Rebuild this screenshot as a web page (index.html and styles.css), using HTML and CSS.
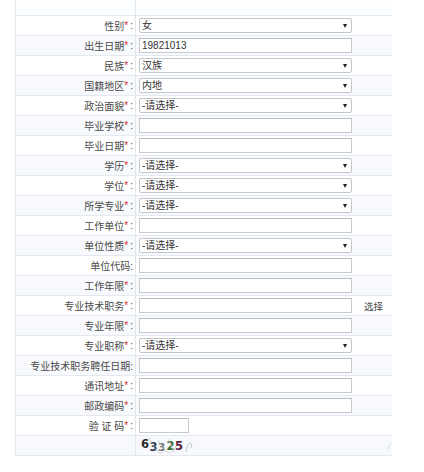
FILE: index.html
```html
<!DOCTYPE html>
<html lang="zh-CN">
<head>
<meta charset="utf-8">
<title>报名信息</title>
<link rel="stylesheet" href="styles.css">
</head>
<body>
<div class="form">
  <div class="row top"><div class="label"></div><div class="value"></div></div>
  <div class="row"><div class="label">性别<span class="req">*</span>:</div><div class="value"><span class="select"><span>女</span><span class="arrow"></span></span></div></div>
  <div class="row alt"><div class="label">出生日期<span class="req">*</span>:</div><div class="value"><span class="input">19821013</span></div></div>
  <div class="row"><div class="label">民族<span class="req">*</span>:</div><div class="value"><span class="select"><span>汉族</span><span class="arrow"></span></span></div></div>
  <div class="row alt"><div class="label">国籍地区<span class="req">*</span>:</div><div class="value"><span class="select"><span>内地</span><span class="arrow"></span></span></div></div>
  <div class="row"><div class="label">政治面貌<span class="req">*</span>:</div><div class="value"><span class="select"><span>-请选择-</span><span class="arrow"></span></span></div></div>
  <div class="row alt"><div class="label">毕业学校<span class="req">*</span>:</div><div class="value"><span class="input"></span></div></div>
  <div class="row"><div class="label">毕业日期<span class="req">*</span>:</div><div class="value"><span class="input"></span></div></div>
  <div class="row alt"><div class="label">学历<span class="req">*</span>:</div><div class="value"><span class="select"><span>-请选择-</span><span class="arrow"></span></span></div></div>
  <div class="row"><div class="label">学位<span class="req">*</span>:</div><div class="value"><span class="select"><span>-请选择-</span><span class="arrow"></span></span></div></div>
  <div class="row alt"><div class="label">所学专业<span class="req">*</span>:</div><div class="value"><span class="select"><span>-请选择-</span><span class="arrow"></span></span></div></div>
  <div class="row"><div class="label">工作单位<span class="req">*</span>:</div><div class="value"><span class="input"></span></div></div>
  <div class="row alt"><div class="label">单位性质<span class="req">*</span>:</div><div class="value"><span class="select"><span>-请选择-</span><span class="arrow"></span></span></div></div>
  <div class="row"><div class="label">单位代码:</div><div class="value"><span class="input"></span></div></div>
  <div class="row alt"><div class="label">工作年限<span class="req">*</span>:</div><div class="value"><span class="input"></span></div></div>
  <div class="row"><div class="label">专业技术职务<span class="req">*</span>:</div><div class="value"><span class="input"></span><span class="pick">选择</span></div></div>
  <div class="row alt"><div class="label">专业年限<span class="req">*</span>:</div><div class="value"><span class="input"></span></div></div>
  <div class="row"><div class="label">专业职称<span class="req">*</span>:</div><div class="value"><span class="select"><span>-请选择-</span><span class="arrow"></span></span></div></div>
  <div class="row alt"><div class="label">专业技术职务聘任日期:</div><div class="value"><span class="input"></span></div></div>
  <div class="row"><div class="label">通讯地址<span class="req">*</span>:</div><div class="value"><span class="input"></span></div></div>
  <div class="row alt"><div class="label">邮政编码<span class="req">*</span>:</div><div class="value"><span class="input"></span></div></div>
  <div class="row"><div class="label">验 证 码<span class="req">*</span>:</div><div class="value"><span class="input short"></span></div></div>
  <div class="row alt"><div class="label"></div><div class="value">
    <span class="captcha">
      <span class="d d1">6</span><span class="d d2">3</span><span class="d d3">3</span><span class="d d4">2</span><span class="d d5">5</span>
      <svg class="noise" width="56" height="20" viewBox="0 0 56 20"><path d="M8 2 C11 6 12 11 16 15 S22 17 24 13" fill="none" stroke="#b9c2c0" stroke-width="0.7"/><path d="M17 4 C20 9 22 13 26 16 S33 15 35 10" fill="none" stroke="#c3c9c4" stroke-width="0.7"/><path d="M27 3 C30 8 31 13 34 17" fill="none" stroke="#c0c6c2" stroke-width="0.7"/><path d="M45 16 C46 11 47 7 49 7 C51 7 51 10 50 12" fill="none" stroke="#a9b0b0" stroke-width="0.7"/></svg>
    </span>
    <span class="speck">⁄</span>
  </div></div>
</div>
</body>
</html>
```

FILE: styles.css
```css
body {
  margin: 0;
  background: #ffffff;
  font-family: "Liberation Sans", "Noto Sans CJK SC", sans-serif;
  font-size: 10px;
  color: #333333;
}

.form {
  margin-left: 15px;
  width: 377px;
  border-left: 1px solid #e1e7ed;
  box-sizing: border-box;
}

.row {
  display: flex;
  height: 20px;
  box-sizing: border-box;
  border-bottom: 1px solid #e4e9ef;
  background: #ffffff;
}

.row.alt {
  background: #f7f9fc;
}

.row.top {
  height: 16px;
  background: #fcfdfe;
}

.label {
  width: 120px;
  flex: none;
  box-sizing: border-box;
  border-right: 1px solid #e1e7ed;
  display: flex;
  align-items: center;
  justify-content: flex-end;
  padding-right: 2px;
  color: #4a4a4a;
  white-space: pre;
}

.req {
  color: #d0302f;
  margin: 0 2px 0 0;
}

.value {
  flex: 1;
  display: flex;
  align-items: center;
  padding-left: 3px;
}

.input,
.select {
  width: 213px;
  height: 15px;
  box-sizing: border-box;
  border: 1px solid #c8cbce;
  border-top-color: #b8bcc0;
  background: #ffffff;
  display: flex;
  align-items: center;
  padding: 0 2px;
  line-height: 13px;
}

.select {
  border-radius: 2px;
  border-color: #c5c8cb;
  justify-content: space-between;
  padding-right: 4px;
}

.arrow {
  width: 0;
  height: 0;
  border-left: 2.5px solid transparent;
  border-right: 2.5px solid transparent;
  border-top: 4px solid #222222;
}

.input.short {
  width: 50px;
}

.pick {
  margin-left: 12px;
  color: #444444;
  font-size: 9.5px;
}

.captcha {
  position: relative;
  display: flex;
  align-items: center;
  height: 19px;
  padding-left: 2px;
  font-family: "DejaVu Sans", sans-serif;
  font-weight: bold;
  font-size: 11.5px;
}

.d {
  display: inline-block;
  width: 8.5px;
}

.d1 { color: #2c2c2c; transform: translateY(-2px); }
.d2 { color: #2f3a52; transform: translateY(1px); }
.d3 { color: #6f7472; font-size: 10.5px; transform: translateY(1px); }
.d4 { color: #3d6a34; transform: translateY(0px); }
.d5 { color: #5b2342; transform: translateY(0px); }

.noise {
  position: absolute;
  left: 2px;
  top: 0;
}

.speck {
  margin-left: auto;
  margin-right: 2px;
  color: #c8cccc;
  font-size: 9px;
}
```
